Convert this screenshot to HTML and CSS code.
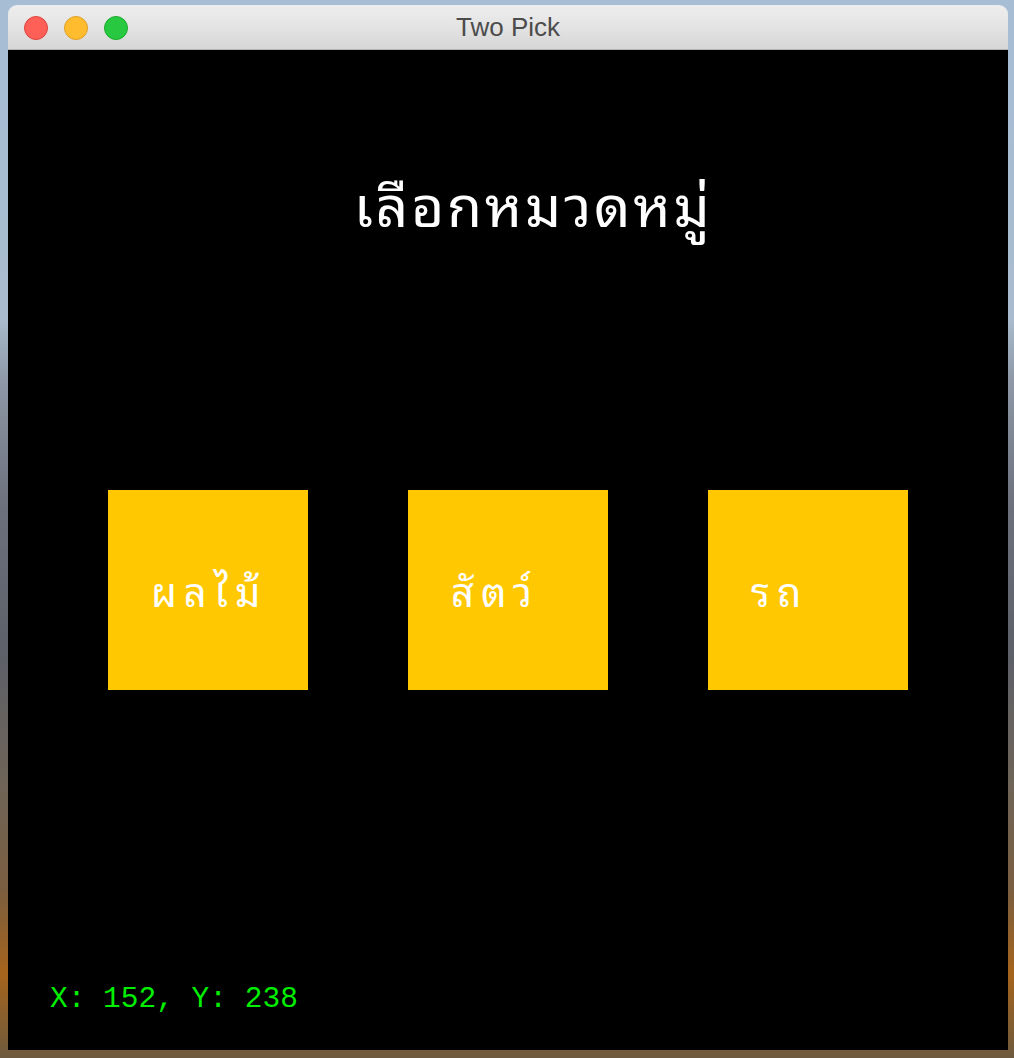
FILE: index.html
```html
<!DOCTYPE html>
<html lang="th">
<head>
<meta charset="utf-8">
<title>Two Pick</title>
<link rel="stylesheet" href="styles.css">
</head>
<body>
<div class="desktop">
  <div class="window">
    <div class="titlebar">
      <div class="lights">
        <span class="light red"></span>
        <span class="light yellow"></span>
        <span class="light green"></span>
      </div>
      <div class="wintitle">Two Pick</div>
    </div>
    <div class="canvas">
      <h1 class="heading">เลือกหมวดหมู่</h1>
      <div class="choices">
        <div class="choice">ผลไม้</div>
        <div class="choice">สัตว์</div>
        <div class="choice">รถ</div>
      </div>
      <div class="coords">X: 152, Y: 238</div>
    </div>
  </div>
</div>
</body>
</html>
```

FILE: styles.css
```css
html, body {
  margin: 0;
  padding: 0;
}
body {
  width: 1014px;
  height: 1058px;
  overflow: hidden;
  background: linear-gradient(180deg, #a6bdd4 0%, #a9bccf 30%, #8e98a6 36%, #6b707c 48%, #5d6068 62%, #6e6458 74%, #7a5e40 84%, #a5641c 92%, #6e5a3e 100%);
}
.desktop {
  padding: 5px 0 0 8px;
}
.window {
  width: 1000px;
  border-radius: 9px 9px 0 0;
  overflow: hidden;
}
.titlebar {
  position: relative;
  height: 44px;
  background: linear-gradient(180deg, #ededed 0%, #e6e6e6 40%, #d6d6d6 100%);
  border-bottom: 1px solid #b4b4b4;
  display: flex;
  align-items: center;
  justify-content: center;
}
.lights {
  position: absolute;
  left: 16px;
  top: 11px;
  display: flex;
  gap: 16px;
}
.light {
  width: 22px;
  height: 22px;
  border-radius: 50%;
  display: block;
}
.red { background: #fe5f57; border: 1px solid #e0443e; }
.yellow { background: #febc2e; border: 1px solid #dea123; }
.green { background: #28c840; border: 1px solid #1aab29; }
.wintitle {
  font-family: "Liberation Sans", Arial, sans-serif;
  font-size: 26px;
  color: #4c4c4c;
  line-height: 1;
}
.canvas {
  height: 1000px;
  background: #000;
  display: flex;
  flex-direction: column;
  font-family: "Noto Sans Thai Looped", "Noto Sans Thai", "Tlwg Typist", "Loma", "Garuda", "DejaVu Sans", sans-serif;
}
.heading {
  margin: 0;
  padding-top: 112px;
  font-weight: normal;
  font-size: 57px;
  line-height: 80px;
  letter-spacing: 2.7px;
  color: #fff;
  text-align: center;
  padding-left: 50px;
}
.choices {
  display: flex;
  gap: 100px;
  padding-left: 100px;
  margin-top: 248px;
}
.choice {
  width: 200px;
  height: 200px;
  box-sizing: border-box;
  background: #ffc800;
  color: #fff;
  font-size: 40px;
  line-height: 60px;
  letter-spacing: 7px;
  padding: 69px 0 0 43px;
}
.coords {
  margin-top: auto;
  margin-bottom: 36px;
  margin-left: 42px;
  font-family: "Liberation Mono", "Courier New", monospace;
  font-size: 29.5px;
  line-height: 30px;
  color: #00ee00;
}
```
